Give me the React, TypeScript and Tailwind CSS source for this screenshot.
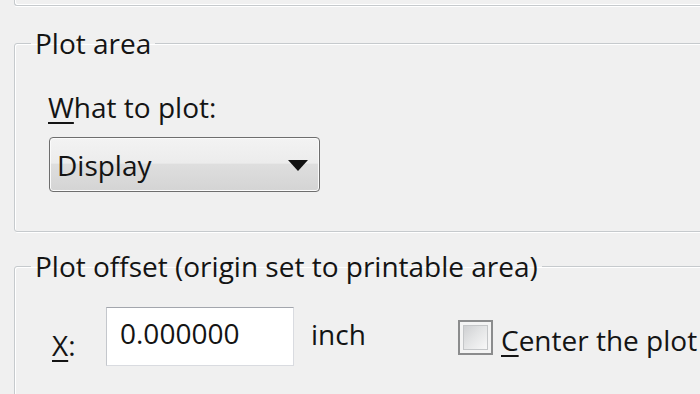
import React from "react";

const lineC = "border-[#c6cacd]";

export default function App() {
  return (
    <div className="w-[700px] h-[394px] overflow-hidden bg-[#f0f0f0] text-[#141414] font-medium font-['Open_Sans','Noto_Sans',sans-serif]">
      {/* bottom of the previous group box */}
      <div className={`ml-[14px] w-[720px] h-[6px] border-l border-b ${lineC} rounded-bl-[3px] shadow-[inset_1px_-1px_0_#ffffff,0_1px_0_#ffffff]`} />

      {/* Plot area */}
      <fieldset className={`ml-[14px] mt-[19px] w-[720px] border ${lineC} rounded-[3px] pb-[39px] shadow-[inset_1px_1px_0_#ffffff,1px_1px_0_#ffffff]`}>
        <legend className="ml-[16px] px-[4px] text-[28px] leading-[36px]">Plot area</legend>
        <div className="pl-[33px] pt-[28px]">
          <div className="text-[28px] leading-[36px]">
            <span className="underline decoration-[2px] underline-offset-[4px]">W</span>hat to plot:
          </div>
          <div className="mt-[12px] ml-[1px] w-[271px] h-[55px] rounded-[4px] border border-[#6e6e6e] bg-[linear-gradient(to_bottom,#f3f3f3_0%,#ececec_47%,#dedede_50%,#d4d4d4_100%)] shadow-[inset_0_0_0_1px_#fbfbfb] flex items-center justify-between pl-[7px] pr-[11px]">
            <span className="text-[28px] leading-[36px]">Display</span>
            <svg width="20" height="11" viewBox="0 0 20 11" className="mt-[2px]">
              <polygon points="0,0 20,0 10,11" fill="#111111" />
            </svg>
          </div>
        </div>
      </fieldset>

      {/* Plot offset */}
      <fieldset className={`ml-[14px] mt-[16px] w-[720px] h-[200px] border ${lineC} rounded-[3px] shadow-[inset_1px_1px_0_#ffffff,1px_1px_0_#ffffff]`}>
        <legend className="ml-[16px] px-[4px] text-[28px] leading-[36px]">Plot offset (origin set to printable area)</legend>
        <div className="flex items-start pl-[37px] pt-[23px] text-[28px] leading-[36px]">
          <div className="w-[54px] mt-[20px]">
            <span className="underline decoration-[2px] underline-offset-[4px]">X</span>:
          </div>
          <div className="w-[188px] h-[59px] bg-white border border-[#d9dbe0] border-t-[#a3a6ad] border-l-[#c4c7cc] pl-[13px] pt-[7px]">
            0.000000
          </div>
          <div className="ml-[17px] w-[147px] mt-[9px]">inch</div>
          <div className="mt-[13px] w-[35px] h-[35px] border-2 border-[#8b8c8d] p-[3px] bg-[#f4f4f4]">
            <div className="w-full h-full border border-[#c4c6c8] bg-[linear-gradient(135deg,#cfd0d2_0%,#e3e4e5_45%,#f8f8f8_100%)]" />
          </div>
          <div className="ml-[8px] mt-[15px] whitespace-nowrap">
            <span className="underline decoration-[2px] underline-offset-[4px]">C</span>enter the plot
          </div>
        </div>
      </fieldset>
    </div>
  );
}
